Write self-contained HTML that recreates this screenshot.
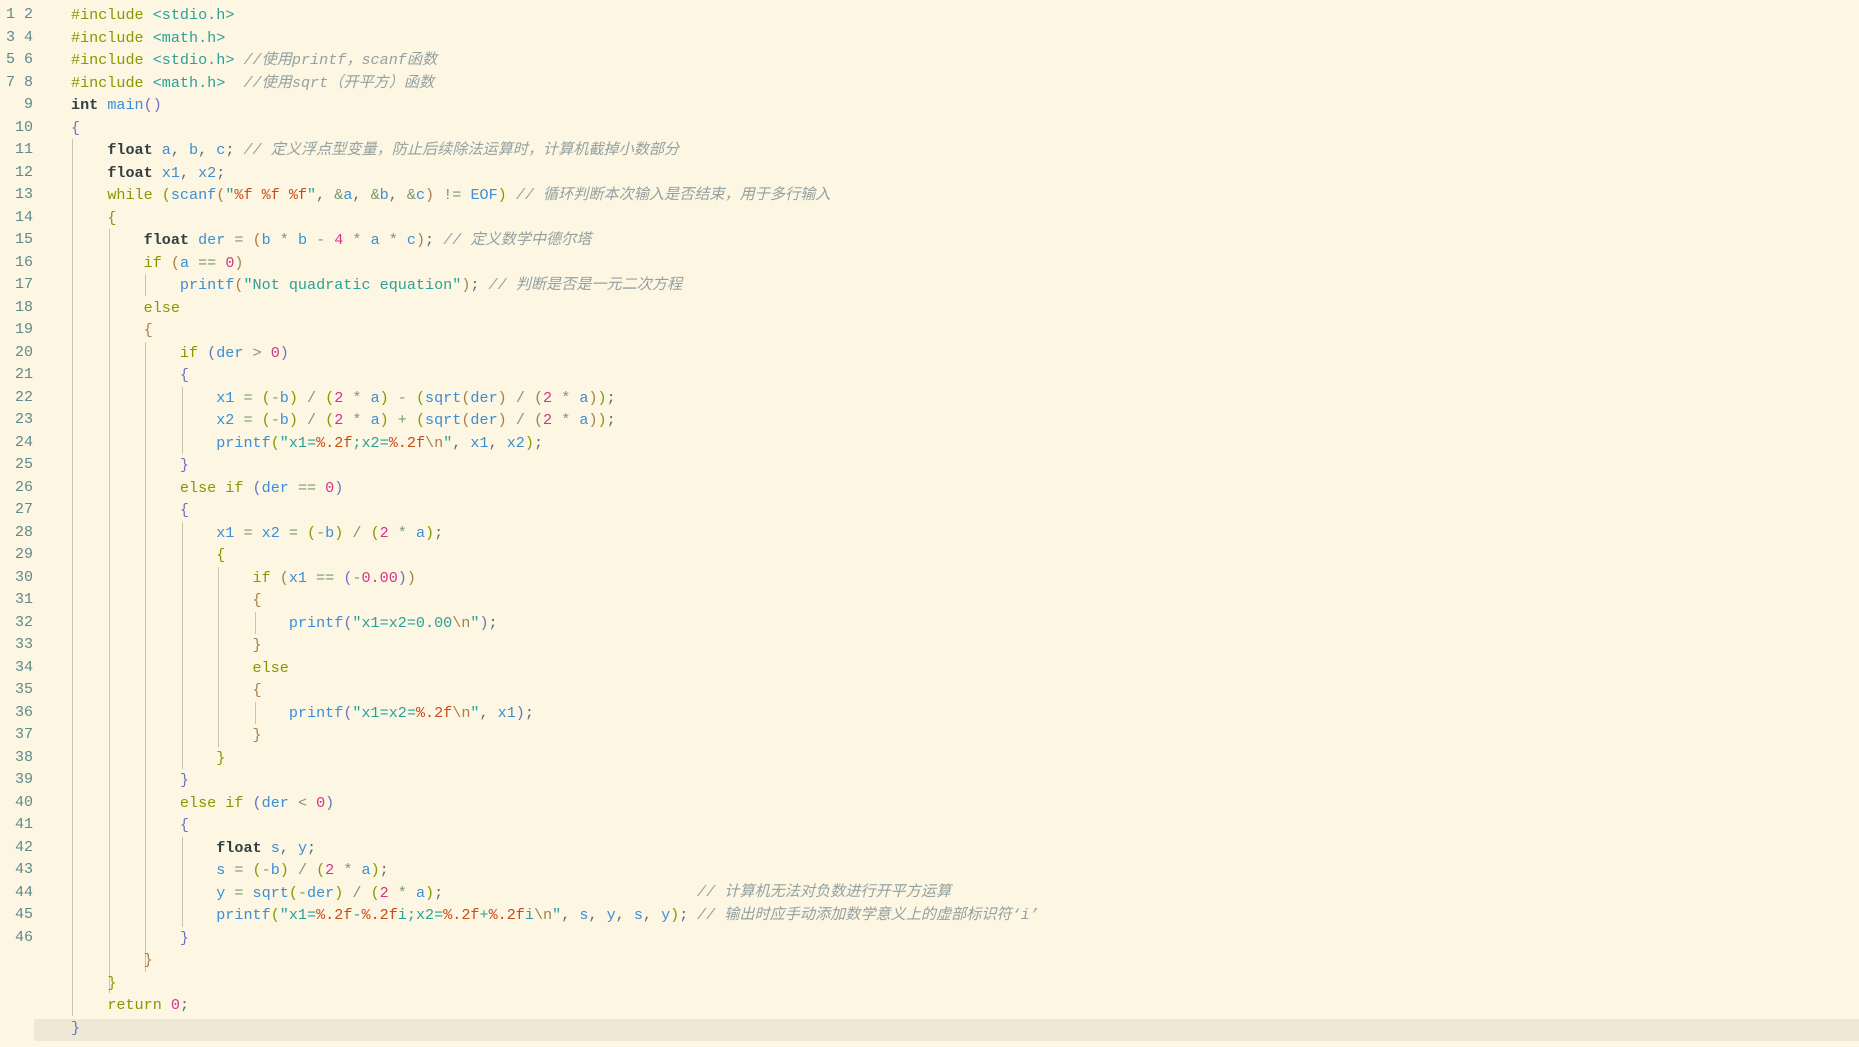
<!DOCTYPE html>
<html><head><meta charset="utf-8"><style>
html,body{margin:0;padding:0;background:#fdf6e3;width:1859px;height:1047px;overflow:hidden;position:relative}
pre{margin:0;position:absolute;left:71px;top:4px;font-family:"Liberation Mono","Noto Sans CJK SC",monospace;font-size:15.13px;line-height:22.5px;color:#586e75}
.ln{position:absolute;left:0;top:4px;width:33px;text-align:right;font-family:"Liberation Mono",monospace;font-size:15px;line-height:22.5px;color:#5f8a8a}
.hl{position:absolute;left:34px;top:1019px;width:1825px;height:22px;background:#eee8d5}
.g{position:absolute;width:1px;background:#c9c3b0}
.k{font-weight:bold;color:#333f40}.c{color:#859900}.v{color:#3a8fd6}.n{color:#d33682}.s{color:#2aa198}.f{color:#cb4b16}
.m{color:#93a1a1;font-style:italic}.o{color:#7a9a6a}.a{color:#6c71c4}.b{color:#859900}.r{color:#a8804a}.h{color:#2aa198}
.cm{position:absolute;font-family:"Liberation Mono","Noto Sans CJK SC",monospace;font-size:15.13px;line-height:22.5px;color:#93a1a1;font-style:italic}
</style></head><body>
<div class="hl"></div>
<div class="g" style="left:72px;top:139px;height:877px"></div>
<div class="g" style="left:109px;top:229px;height:764px"></div>
<div class="g" style="left:145px;top:274px;height:22px"></div>
<div class="g" style="left:145px;top:342px;height:630px"></div>
<div class="g" style="left:182px;top:387px;height:67px"></div>
<div class="g" style="left:182px;top:522px;height:247px"></div>
<div class="g" style="left:182px;top:837px;height:90px"></div>
<div class="g" style="left:218px;top:567px;height:180px"></div>
<div class="g" style="left:255px;top:612px;height:22px"></div>
<div class="g" style="left:255px;top:702px;height:22px"></div>
<div class="ln">1
2
3
4
5
6
7
8
9
10
11
12
13
14
15
16
17
18
19
20
21
22
23
24
25
26
27
28
29
30
31
32
33
34
35
36
37
38
39
40
41
42
43
44
45
46</div>
<div class="ln" style="display:none"></div>
<pre><span class="c">#include</span> <span class="h">&lt;stdio.h&gt;</span>
<span class="c">#include</span> <span class="h">&lt;math.h&gt;</span>
<span class="c">#include</span> <span class="h">&lt;stdio.h&gt;</span> <span class="m">//使用printf，scanf函数</span>
<span class="c">#include</span> <span class="h">&lt;math.h&gt;</span>  <span class="m">//使用sqrt（开平方）函数</span>
<span class="k">int</span> <span class="v">main</span><span class="a">()</span>
<span class="a">{</span>
    <span class="k">float</span> <span class="v">a</span>, <span class="v">b</span>, <span class="v">c</span>; <span class="m">// 定义浮点型变量，防止后续除法运算时，计算机截掉小数部分</span>
    <span class="k">float</span> <span class="v">x1</span>, <span class="v">x2</span>;
    <span class="c">while</span> <span class="b">(</span><span class="v">scanf</span><span class="r">(</span><span class="s">"</span><span class="f">%f %f %f</span><span class="s">"</span>, <span class="o">&amp;</span><span class="v">a</span>, <span class="o">&amp;</span><span class="v">b</span>, <span class="o">&amp;</span><span class="v">c</span><span class="r">)</span> <span class="o">!=</span> <span class="v">EOF</span><span class="b">)</span> <span class="m">// 循环判断本次输入是否结束，用于多行输入</span>
    <span class="b">{</span>
        <span class="k">float</span> <span class="v">der</span> <span class="o">=</span> <span class="r">(</span><span class="v">b</span> <span class="o">*</span> <span class="v">b</span> <span class="o">-</span> <span class="n">4</span> <span class="o">*</span> <span class="v">a</span> <span class="o">*</span> <span class="v">c</span><span class="r">)</span>; <span class="m">// 定义数学中德尔塔</span>
        <span class="c">if</span> <span class="r">(</span><span class="v">a</span> <span class="o">==</span> <span class="n">0</span><span class="r">)</span>
            <span class="v">printf</span><span class="r">(</span><span class="s">"Not quadratic equation"</span><span class="r">)</span>; <span class="m">// 判断是否是一元二次方程</span>
        <span class="c">else</span>
        <span class="r">{</span>
            <span class="c">if</span> <span class="a">(</span><span class="v">der</span> <span class="o">&gt;</span> <span class="n">0</span><span class="a">)</span>
            <span class="a">{</span>
                <span class="v">x1</span> <span class="o">=</span> <span class="b">(</span><span class="o">-</span><span class="v">b</span><span class="b">)</span> <span class="o">/</span> <span class="b">(</span><span class="n">2</span> <span class="o">*</span> <span class="v">a</span><span class="b">)</span> <span class="o">-</span> <span class="b">(</span><span class="v">sqrt</span><span class="r">(</span><span class="v">der</span><span class="r">)</span> <span class="o">/</span> <span class="r">(</span><span class="n">2</span> <span class="o">*</span> <span class="v">a</span><span class="r">)</span><span class="b">)</span>;
                <span class="v">x2</span> <span class="o">=</span> <span class="b">(</span><span class="o">-</span><span class="v">b</span><span class="b">)</span> <span class="o">/</span> <span class="b">(</span><span class="n">2</span> <span class="o">*</span> <span class="v">a</span><span class="b">)</span> <span class="o">+</span> <span class="b">(</span><span class="v">sqrt</span><span class="r">(</span><span class="v">der</span><span class="r">)</span> <span class="o">/</span> <span class="r">(</span><span class="n">2</span> <span class="o">*</span> <span class="v">a</span><span class="r">)</span><span class="b">)</span>;
                <span class="v">printf</span><span class="b">(</span><span class="s">"x1=</span><span class="f">%.2f</span><span class="s">;x2=</span><span class="f">%.2f</span><span class="r">\n</span><span class="s">"</span>, <span class="v">x1</span>, <span class="v">x2</span><span class="b">)</span>;
            <span class="a">}</span>
            <span class="c">else if</span> <span class="a">(</span><span class="v">der</span> <span class="o">==</span> <span class="n">0</span><span class="a">)</span>
            <span class="a">{</span>
                <span class="v">x1</span> <span class="o">=</span> <span class="v">x2</span> <span class="o">=</span> <span class="b">(</span><span class="o">-</span><span class="v">b</span><span class="b">)</span> <span class="o">/</span> <span class="b">(</span><span class="n">2</span> <span class="o">*</span> <span class="v">a</span><span class="b">)</span>;
                <span class="b">{</span>
                    <span class="c">if</span> <span class="r">(</span><span class="v">x1</span> <span class="o">==</span> <span class="a">(</span><span class="o">-</span><span class="n">0.00</span><span class="a">)</span><span class="r">)</span>
                    <span class="r">{</span>
                        <span class="v">printf</span><span class="a">(</span><span class="s">"x1=x2=0.00</span><span class="r">\n</span><span class="s">"</span><span class="a">)</span>;
                    <span class="r">}</span>
                    <span class="c">else</span>
                    <span class="r">{</span>
                        <span class="v">printf</span><span class="a">(</span><span class="s">"x1=x2=</span><span class="f">%.2f</span><span class="r">\n</span><span class="s">"</span>, <span class="v">x1</span><span class="a">)</span>;
                    <span class="r">}</span>
                <span class="b">}</span>
            <span class="a">}</span>
            <span class="c">else if</span> <span class="a">(</span><span class="v">der</span> <span class="o">&lt;</span> <span class="n">0</span><span class="a">)</span>
            <span class="a">{</span>
                <span class="k">float</span> <span class="v">s</span>, <span class="v">y</span>;
                <span class="v">s</span> <span class="o">=</span> <span class="b">(</span><span class="o">-</span><span class="v">b</span><span class="b">)</span> <span class="o">/</span> <span class="b">(</span><span class="n">2</span> <span class="o">*</span> <span class="v">a</span><span class="b">)</span>;
                <span class="v">y</span> <span class="o">=</span> <span class="v">sqrt</span><span class="b">(</span><span class="o">-</span><span class="v">der</span><span class="b">)</span> <span class="o">/</span> <span class="b">(</span><span class="n">2</span> <span class="o">*</span> <span class="v">a</span><span class="b">)</span>;
                <span class="v">printf</span><span class="b">(</span><span class="s">"x1=</span><span class="f">%.2f</span><span class="s">-</span><span class="f">%.2f</span><span class="s">i;x2=</span><span class="f">%.2f</span><span class="s">+</span><span class="f">%.2f</span><span class="s">i</span><span class="r">\n</span><span class="s">"</span>, <span class="v">s</span>, <span class="v">y</span>, <span class="v">s</span>, <span class="v">y</span><span class="b">)</span>;
            <span class="a">}</span>
        <span class="r">}</span>
    <span class="b">}</span>
    <span class="c">return</span> <span class="n">0</span>;
<span class="a">}</span></pre>
<div class="cm" style="left:697px;top:881px">// 计算机无法对负数进行开平方运算</div>
<div class="cm" style="left:697px;top:904px">// 输出时应手动添加数学意义上的虚部标识符‘i’</div>
</body></html>
